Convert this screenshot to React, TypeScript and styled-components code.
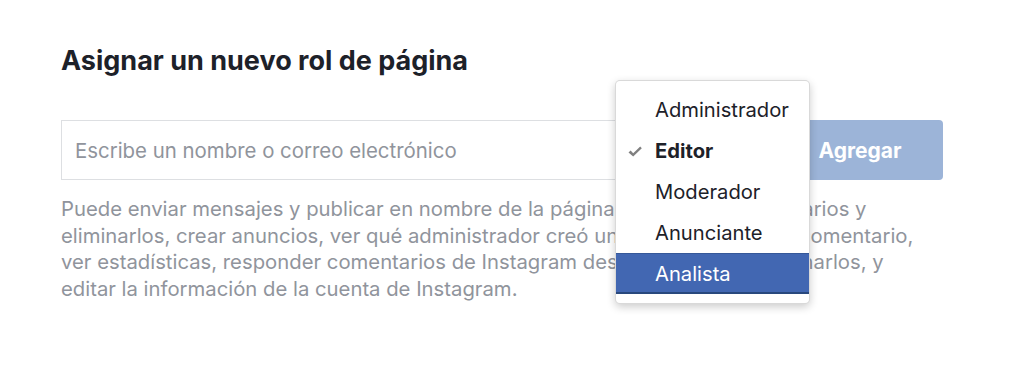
import React from "react";
import styled, { createGlobalStyle } from "styled-components";

const roles = ["Administrador", "Editor", "Moderador", "Anunciante", "Analista"];
const selected = "Editor";
const hovered = "Analista";

export default function App() {
  return (
    <>
      <GlobalStyle />
      <Page>
        <Title>Asignar un nuevo rol de página</Title>
        <AddRow>
          <NameInput placeholder="Escribe un nombre o correo electrónico" />
          <AddButton disabled>Agregar</AddButton>
        </AddRow>
        <Description>
          Puede enviar mensajes y publicar en nombre de la página, responder comentarios y
          <br />
          eliminarlos, crear anuncios, ver qué administrador creó una publicación o un comentario,
          <br />
          ver estadísticas, responder comentarios de Instagram desde la página y eliminarlos, y
          <br />
          editar la información de la cuenta de Instagram.
        </Description>
        <RoleMenu>
          {roles.map((r) => (
            <RoleItem key={r} $active={r === hovered} $checked={r === selected}>
              {r === selected && (
                <Check viewBox="0 0 16 16">
                  <path d="M1.5 8.6 L3.6 6.6 L6.2 9.2 L13.2 2.6 L14.8 4.2 L6.2 12.6 Z" />
                </Check>
              )}
              {r}
            </RoleItem>
          ))}
        </RoleMenu>
      </Page>
    </>
  );
}

const GlobalStyle = createGlobalStyle`
  body {
    margin: 0;
    background: #fff;
    font-family: "Inter", "Liberation Sans", sans-serif;
  }
`;

const Page = styled.div`
  position: relative;
  padding: 43px 81px 0 61px;
  height: 378px;
  box-sizing: border-box;
`;

const Title = styled.h2`
  margin: 0;
  font-size: 27px;
  line-height: 36px;
  font-weight: 700;
  color: #1d2129;
`;

const AddRow = styled.div`
  display: flex;
  gap: 8px;
  margin-top: 41px;
  height: 60px;
`;

const NameInput = styled.input`
  flex: 1;
  border: 1px solid #dddfe2;
  padding: 0 13px;
  font-family: inherit;
  font-size: 20.4px;
  color: #1d2129;
  outline: none;
  &::placeholder {
    color: #90949c;
  }
`;

const AddButton = styled.button`
  width: 166px;
  border: none;
  border-radius: 4px;
  background: #9cb4d8;
  color: #fff;
  font-family: inherit;
  font-size: 21px;
  font-weight: 700;
  padding: 0;
`;

const Description = styled.p`
  margin: 16px 0 0;
  font-size: 20.3px;
  line-height: 26.5px;
  color: #90949c;
  white-space: nowrap;
`;

const RoleMenu = styled.div`
  position: absolute;
  left: 615px;
  top: 80px;
  width: 195px;
  padding: 8px 0 9px;
  box-sizing: border-box;
  background: #fff;
  border: 1px solid rgba(0, 0, 0, 0.15);
  border-radius: 5px;
  box-shadow: 0 3px 8px rgba(0, 0, 0, 0.2);
`;

const RoleItem = styled.div<{ $active: boolean; $checked: boolean }>`
  position: relative;
  height: 41px;
  display: flex;
  align-items: center;
  padding-left: 39px;
  box-sizing: border-box;
  font-size: 20.2px;
  font-weight: ${({ $checked }) => ($checked ? 700 : 400)};
  color: ${({ $active }) => ($active ? "#fff" : "#1d2129")};
  background: ${({ $active }) => ($active ? "#4267b2" : "transparent")};
  border-top: 1px solid ${({ $active }) => ($active ? "#365899" : "transparent")};
  border-bottom: 2px solid ${({ $active }) => ($active ? "#29487d" : "transparent")};
`;

const Check = styled.svg`
  position: absolute;
  left: 11px;
  top: 13px;
  width: 16px;
  height: 16px;
  fill: #808080;
`;
